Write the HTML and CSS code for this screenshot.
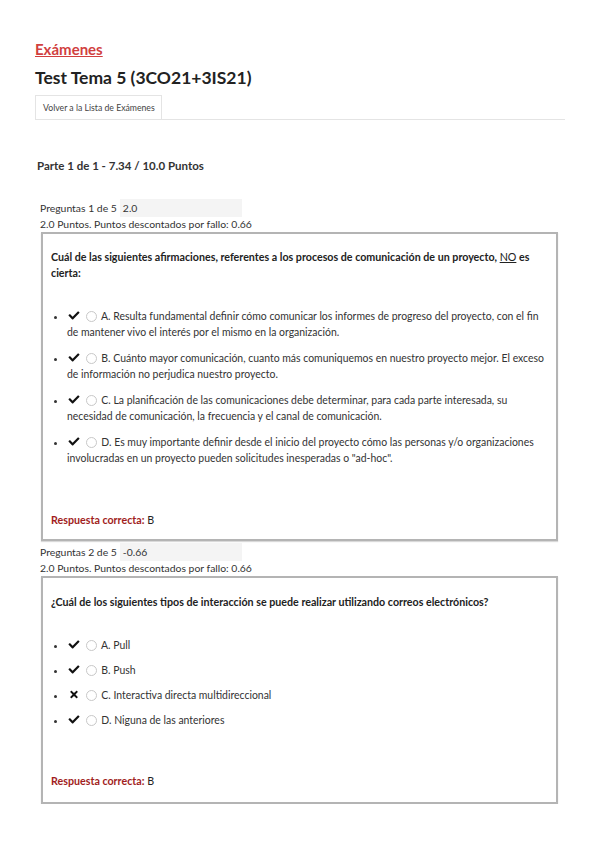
FILE: index.html
```html
<!DOCTYPE html>
<html lang="es">
<head>
    <meta charset="UTF-8">
    <title>Test Tema 5 (3CO21+3IS21)</title>
    <link rel="stylesheet" href="styles.css">
</head>
<body>
    <div class="page">
        <h2 class="crumb"><a href="#">Exámenes</a></h2>
        <h1 class="title">Test Tema 5 (3CO21+3IS21)</h1>
        <div class="tabs">
            <a class="tab" href="#">Volver a la Lista de Exámenes</a>
        </div>

        <h3 class="part">Parte 1 de 1 - 7.34 / 10.0 Puntos</h3>

        <div class="question">
            <div class="q-head">
                <span>Preguntas 1 de 5</span>
                <span class="score">2.0</span>
            </div>
            <div class="q-points">2.0 Puntos. Puntos descontados por fallo: 0.66</div>
            <div class="q-box">
                <p class="q-text">Cuál de las siguientes afirmaciones, referentes a los procesos de comunicación de un proyecto, <span class="neg">NO</span> es cierta:</p>
                <ul class="answers">
                    <li>
                        <svg class="mark" viewBox="0 0 512 512"><path d="M173.9 439.4 7.5 273c-10-10-10-26.2 0-36.2l36.2-36.2c10-10 26.2-10 36.2 0L192 312.7 432.1 72.6c10-10 26.2-10 36.2 0l36.2 36.2c10 10 10 26.2 0 36.2L210.1 439.4c-10 10-26.2 10-36.2 0z"/></svg>
                        <span class="radio"></span>
                        A. Resulta fundamental definir cómo comunicar los informes de progreso del proyecto, con el fin de mantener vivo el interés por el mismo en la organización.
                    </li>
                    <li>
                        <svg class="mark" viewBox="0 0 512 512"><path d="M173.9 439.4 7.5 273c-10-10-10-26.2 0-36.2l36.2-36.2c10-10 26.2-10 36.2 0L192 312.7 432.1 72.6c10-10 26.2-10 36.2 0l36.2 36.2c10 10 10 26.2 0 36.2L210.1 439.4c-10 10-26.2 10-36.2 0z"/></svg>
                        <span class="radio"></span>
                        B. Cuánto mayor comunicación, cuanto más comuniquemos en nuestro proyecto mejor. El exceso de información no perjudica nuestro proyecto.
                    </li>
                    <li>
                        <svg class="mark" viewBox="0 0 512 512"><path d="M173.9 439.4 7.5 273c-10-10-10-26.2 0-36.2l36.2-36.2c10-10 26.2-10 36.2 0L192 312.7 432.1 72.6c10-10 26.2-10 36.2 0l36.2 36.2c10 10 10 26.2 0 36.2L210.1 439.4c-10 10-26.2 10-36.2 0z"/></svg>
                        <span class="radio"></span>
                        C. La planificación de las comunicaciones debe determinar, para cada parte interesada, su necesidad de comunicación, la frecuencia y el canal de comunicación.
                    </li>
                    <li>
                        <svg class="mark" viewBox="0 0 512 512"><path d="M173.9 439.4 7.5 273c-10-10-10-26.2 0-36.2l36.2-36.2c10-10 26.2-10 36.2 0L192 312.7 432.1 72.6c10-10 26.2-10 36.2 0l36.2 36.2c10 10 10 26.2 0 36.2L210.1 439.4c-10 10-26.2 10-36.2 0z"/></svg>
                        <span class="radio"></span>
                        D. Es muy importante definir desde el inicio del proyecto cómo las personas y/o organizaciones involucradas en un proyecto pueden solicitudes inesperadas o "ad-hoc".
                    </li>
                </ul>
                <p class="correct"><strong>Respuesta correcta:</strong> B</p>
            </div>
        </div>

        <div class="question">
            <div class="q-head">
                <span>Preguntas 2 de 5</span>
                <span class="score">-0.66</span>
            </div>
            <div class="q-points">2.0 Puntos. Puntos descontados por fallo: 0.66</div>
            <div class="q-box compact">
                <p class="q-text">¿Cuál de los siguientes tipos de interacción se puede realizar utilizando correos electrónicos?</p>
                <ul class="answers short">
                    <li>
                        <svg class="mark" viewBox="0 0 512 512"><path d="M173.9 439.4 7.5 273c-10-10-10-26.2 0-36.2l36.2-36.2c10-10 26.2-10 36.2 0L192 312.7 432.1 72.6c10-10 26.2-10 36.2 0l36.2 36.2c10 10 10 26.2 0 36.2L210.1 439.4c-10 10-26.2 10-36.2 0z"/></svg>
                        <span class="radio"></span>
                        A. Pull
                    </li>
                    <li>
                        <svg class="mark" viewBox="0 0 512 512"><path d="M173.9 439.4 7.5 273c-10-10-10-26.2 0-36.2l36.2-36.2c10-10 26.2-10 36.2 0L192 312.7 432.1 72.6c10-10 26.2-10 36.2 0l36.2 36.2c10 10 10 26.2 0 36.2L210.1 439.4c-10 10-26.2 10-36.2 0z"/></svg>
                        <span class="radio"></span>
                        B. Push
                    </li>
                    <li>
                        <svg class="mark cross" viewBox="0 0 352 512"><path d="m242.7 256 100-100c12.3-12.3 12.3-32.2 0-44.4l-22.2-22.2c-12.3-12.3-32.2-12.3-44.4 0L176 189.3 76 89.3c-12.3-12.3-32.2-12.3-44.4 0L9.3 111.6c-12.3 12.3-12.3 32.2 0 44.4l100 100-100 100c-12.3 12.3-12.3 32.2 0 44.4l22.2 22.2c12.3 12.3 32.2 12.3 44.4 0l100-100 100 100c12.3 12.3 32.2 12.3 44.4 0l22.2-22.2c12.3-12.3 12.3-32.2 0-44.4L242.7 256z"/></svg>
                        <span class="radio"></span>
                        C. Interactiva directa multidireccional
                    </li>
                    <li>
                        <svg class="mark" viewBox="0 0 512 512"><path d="M173.9 439.4 7.5 273c-10-10-10-26.2 0-36.2l36.2-36.2c10-10 26.2-10 36.2 0L192 312.7 432.1 72.6c10-10 26.2-10 36.2 0l36.2 36.2c10 10 10 26.2 0 36.2L210.1 439.4c-10 10-26.2 10-36.2 0z"/></svg>
                        <span class="radio"></span>
                        D. Niguna de las anteriores
                    </li>
                </ul>
                <p class="correct"><strong>Respuesta correcta:</strong> B</p>
            </div>
        </div>
    </div>
</body>
</html>
```

FILE: styles.css
```css
* {
    margin: 0;
    padding: 0;
    box-sizing: border-box;
}

body {
    font-family: Lato, 'Open Sans', sans-serif;
    color: #333;
    background: #fff;
}

.page {
    padding: 40px 34px 0 35px;
}

.crumb {
    font-size: 15px;
    font-weight: 700;
    line-height: 18px;
}

.crumb a {
    color: #d13f3f;
    text-decoration: underline;
}

.title {
    font-size: 17.5px;
    font-weight: 700;
    color: #222;
    line-height: 22px;
    margin-top: 9px;
}

.tabs {
    margin-top: 6px;
    border-bottom: 1px solid #e4e4e4;
    display: flex;
}

.tab {
    display: block;
    font-size: 8.7px;
    color: #444;
    text-decoration: none;
    border: 1px solid #e4e4e4;
    border-bottom: none;
    padding: 7px 6px 7px 7px;
    line-height: 9px;
}

.part {
    font-size: 11.5px;
    font-weight: 700;
    color: #333;
    margin: 39px 0 0 2px;
    line-height: 14px;
}

.question {
    margin-left: 5px;
    width: 518px;
}

.part + .question {
    margin-top: 26px;
}

.question + .question {
    margin-top: 2px;
}

.q-head {
    display: flex;
    align-items: center;
    gap: 3px;
    font-size: 10.4px;
    line-height: 18px;
}

.score {
    background: #f4f4f4;
    width: 122px;
    height: 18px;
    padding-left: 3px;
}

.q-points {
    font-size: 10.4px;
    line-height: 14px;
}

.q-box {
    margin: 1px 0 0 1px;
    border: 2px solid #b4b4b4;
    box-shadow: 0 1px 1px rgba(0, 0, 0, 0.15);
    padding: 15px 8px 13px 8px;
}

.q-box.compact {
    padding-top: 16px;
    padding-bottom: 15px;
}

.q-text {
    font-size: 10.7px;
    font-weight: 700;
    line-height: 16px;
    color: #222;
}

.neg {
    font-weight: 400;
    text-decoration: underline;
}

.answers {
    list-style: disc;
    padding-left: 16px;
    margin-top: 27px;
    font-size: 10.45px;
    line-height: 16px;
    color: #333;
}

.answers li {
    margin-bottom: 10px;
}

.answers.short li {
    margin-bottom: 9px;
}

.mark {
    width: 12px;
    height: 11px;
    fill: #111;
    vertical-align: -1px;
    margin: 0 3px 0 1px;
}

.radio {
    display: inline-block;
    width: 11px;
    height: 11px;
    border: 1px solid #c8c8c8;
    border-radius: 50%;
    vertical-align: -2px;
    margin-right: 2px;
}

.correct {
    font-size: 10.7px;
    margin-top: 47px;
    color: #222;
}

.compact .correct {
    margin-top: 46px;
}

.correct strong {
    color: #a11d21;
}
```
